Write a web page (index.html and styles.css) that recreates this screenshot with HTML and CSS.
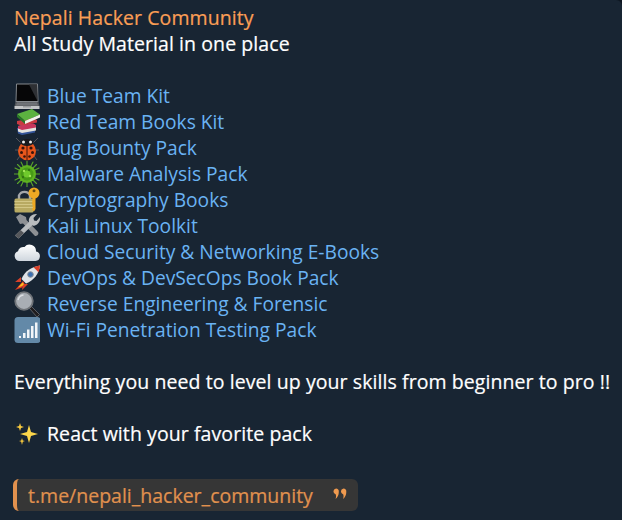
FILE: index.html
```html
<!DOCTYPE html>
<html lang="en">
<head>
<meta charset="utf-8">
<title>Nepali Hacker Community</title>
<link rel="stylesheet" href="styles.css">
</head>
<body>
<main class="bubble">
  <div class="line sender">Nepali Hacker Community</div>
  <div class="line">All Study Material in one place</div>
  <div class="line"></div>
  <ul class="packs">
    <li class="pack"><svg class="emoji" viewBox="0 0 26 26"><path d="M3 .5h20a1 1 0 0 1 1 1l.5 17.500h-23L2 1.500a1 1 0 0 1 1-1z" fill="#85898e"/><path d="M3 1.500h20l.5 16.500h-21z" fill="#060607"/><path d="M15 1.500h8l.5 16.500z" fill="#2e3034"/><path d="M1.500 19h23l1 4H.5z" fill="#54575b"/><path d="M3 20h20M2.500 21h21M2 22h22" stroke="#8c8f93" stroke-width=".6"/><path d="M.5 23h25v3H.5z" fill="#c3c5c7"/><path d="M9 23h8v1.500H9z" fill="#9a9c9f"/></svg><a class="link">Blue Team Kit</a></li>
    <li class="pack"><svg class="emoji" viewBox="0 0 26 26"><path d="M3 19l15-2 3 1.500v5L8 26l-4-1.500z" fill="#34559a"/><path d="M4 17l15-2 3 1.500v5L8 24l-4-1.500z" fill="#e4e4de"/><path d="M3 12l16-3 4 2v2.500L8 17 3 15z" fill="#c93a42"/><path d="M4 17l15-2.500 3 1.500v2.500L8 21l-4-1.500z" fill="#c7365c"/><path d="M3 5L18 0l8 5.500-15 6.500z" fill="#5cb240"/><path d="M3 5l8 7v3L3 8z" fill="#2a7828"/><path d="M11 12l15-6.500v3L11 15z" fill="#f2f2ea"/></svg><a class="link">Red Team Books Kit</a></li>
    <li class="pack"><svg class="emoji" viewBox="0 0 26 26"><g stroke="#55555c" stroke-width="1" fill="none"><path d="M7 8L2 3M19 8l5-5M5 15H1M21 15h4M6 21l-3 4M20 21l3 4"/></g><ellipse cx="13" cy="16" rx="9" ry="9.200" fill="#e8561c"/><path d="M13 10v15" stroke="#43150a" stroke-width="1"/><circle cx="9" cy="13" r="1.600" fill="#3a120a"/><circle cx="17" cy="13" r="1.600" fill="#3a120a"/><circle cx="7.500" cy="17.500" r="1.500" fill="#3a120a"/><circle cx="18.500" cy="17.500" r="1.500" fill="#3a120a"/><circle cx="10.500" cy="21.500" r="1.300" fill="#3a120a"/><circle cx="15.500" cy="21.500" r="1.300" fill="#3a120a"/><ellipse cx="13" cy="7.500" rx="6.500" ry="3.500" fill="#1a1a1e"/><circle cx="9.500" cy="7" r="1.500" fill="#ececec"/><circle cx="16.500" cy="7" r="1.500" fill="#ececec"/></svg><a class="link">Bug Bounty Pack</a></li>
    <li class="pack"><svg class="emoji" viewBox="0 0 26 26"><g stroke="#5aa62c" stroke-width="1.100" stroke-linecap="round"><path d="M13 0v26M0 13h26M3.500 3.500l19 19M22.500 3.500l-19 19M7 1l12 24M19 1L7 25M1 7l24 12M25 7L1 19"/></g><circle cx="13" cy="13" r="9" fill="#5fb321"/><circle cx="13" cy="13" r="6.500" fill="#479a17"/><circle cx="13" cy="13" r="3.500" fill="#6fc92c"/><circle cx="10" cy="10" r="1.200" fill="#a5e65a"/><circle cx="16" cy="15" r="1.200" fill="#a5e65a"/><circle cx="15" cy="9" r="1" fill="#2b6b10"/><circle cx="9" cy="16" r="1" fill="#2b6b10"/></svg><a class="link">Malware Analysis Pack</a></li>
    <li class="pack"><svg class="emoji" viewBox="0 0 26 26"><path d="M5 13V8.500a6 6 0 0 1 11 0V13" fill="none" stroke="#a3a6a9" stroke-width="2.400"/><rect x="0.500" y="11.500" width="19" height="14" rx="1.500" fill="#b8aa62"/><path d="M.5 14.500h19M.5 17.500h19M.5 20.500h19" stroke="#d6cb8a" stroke-width=".9"/><circle cx="20" cy="6" r="5.500" fill="#eda924"/><circle cx="20" cy="3.800" r="1.500" fill="#6a4d10"/><path d="M18.500 10.500h3v11.500l-1.500 2.500-1.800-1.700v-1.300l1-1-1-1 1-1-1-1z" fill="#eda924"/></svg><a class="link">Cryptography Books</a></li>
    <li class="pack"><svg class="emoji" viewBox="0 0 26 26"><path d="M2 4l4-3 6 3 .5 3L24 19c1 1.500 0 4-3 4L9 10.500 6 11z" fill="#8d9094"/><path d="M4.500 25.500l-3.500-3L15 9c-1-4 2.500-8.500 8-8l-3.500 4 .5 2.500 2.500.5 3.500-4c.8 5.500-4 9.500-8 8.500z" fill="#b9bcbf"/><path d="M4.500 25.500l-3.500-3 5.500-5.500 3.500 3z" fill="#55575b"/></svg><a class="link">Kali Linux Toolkit</a></li>
    <li class="pack"><svg class="emoji" viewBox="0 0 26 26"><defs><linearGradient id="cloud" x1="0" y1="0" x2="0" y2="1"><stop offset="0" stop-color="#ffffff"/><stop offset="1" stop-color="#cfd6de"/></linearGradient></defs><path d="M5.500 22a5 5 0 0 1-1.500-9.700A5.500 5.500 0 0 1 10.500 8 6.500 6.500 0 0 1 22 12.500a4.800 4.800 0 0 1-.5 9.500z" fill="url(#cloud)"/></svg><a class="link">Cloud Security &amp; Networking E-Books</a></li>
    <li class="pack"><svg class="emoji" viewBox="0 0 26 26"><path d="M7 12l-6 5 6 0zM14 19l-6 6 1-6z" fill="#d8402a"/><path d="M9 16l-8 9 7-2.500 3-3z" fill="#e03a26"/><path d="M8.500 17.500l-4.500 5 4.200-1.600 1.800-1.900z" fill="#f7c21e"/><path d="M7.500 14C10.500 6 18 2 26 .5c-1 8-6 15-14 18z" fill="#e0e3e7"/><path d="M19.500 2.200C21.500 1.400 24 1 26 .5c-.2 2.300-.7 4.500-1.500 6.700z" fill="#d8402a"/><circle cx="16.500" cy="9.500" r="2.800" fill="#3c6fb0" stroke="#8a8f96" stroke-width="1"/></svg><a class="link">DevOps &amp; DevSecOps Book Pack</a></li>
    <li class="pack"><svg class="emoji" viewBox="0 0 26 26"><path d="M15.500 17.500l2-2 8 8-2.500 2.500z" fill="#1f1d1f" stroke="#6d6f72" stroke-width=".8"/><circle cx="10" cy="10" r="8.800" fill="#a9aeb4" stroke="#6f7378" stroke-width="1.800"/><path d="M4 9a6.500 6.500 0 0 1 5.500-5" stroke="#dbdee2" stroke-width="1.500" fill="none"/></svg><a class="link">Reverse Engineering &amp; Forensic</a></li>
    <li class="pack"><svg class="emoji" viewBox="0 0 26 26"><rect x="0.500" y="0" width="26" height="26" rx="3.500" fill="#6389a8"/><path d="M5 19h2v2H5zM9 16h2.500v5H9zM13 12.500h2.500V21H13zM17 9h2.500v12H17zM21 5.500h2.500V21H21z" fill="#f2f5f8"/></svg><a class="link">Wi-Fi Penetration Testing Pack</a></li>
  </ul>
  <div class="line"></div>
  <div class="line">Everything you need to level up your skills from beginner to pro !!</div>
  <div class="line"></div>
  <div class="line react"><svg class="emoji" viewBox="0 0 26 26"><path d="M15 4l2 7 7 2-7 2-2 7-2-7-7-2 7-2z" fill="#fbd64a"/><path d="M6 2l1 3 3 1-3 1-1 3-1-3-3-1 3-1zM8 17l.8 2.500L11 20l-2.200.800L8 24l-.8-3.200L5 20l2.200-.500z" fill="#f7c93e"/></svg>React with your favorite pack</div>
  <div class="line"></div>
  <div class="quote">
    <span class="quote-text">t.me/nepali_hacker_community</span>
    <svg class="quote-mark" viewBox="0 0 14 12"><path d="M3 .5a3 3 0 0 1 2.800 3.500c0 3-1.300 5.500-3.300 7 .7-2 .6-3.500.3-4.600A3 3 0 0 1 3 .5zM10.500 .5a3 3 0 0 1 2.800 3.500c0 3-1.300 5.500-3.300 7 .7-2 .6-3.500.3-4.600A3 3 0 0 1 10.500 .5z" fill="#f09a4f"/></svg>
  </div>
</main>
</body>
</html>
```
FILE: styles.css
```css
html, body {
  margin: 0;
  height: 100%;
  background: #0e1621;
}
body {
  width: 622px;
  height: 520px;
  overflow: hidden;
  font-family: "Open Sans", "Noto Sans", sans-serif;
  font-size: 19.2px;
  color: #ffffff;
}
.bubble {
  box-sizing: border-box;
  height: 520px;
  padding: 5px 0 0 14px;
  background: #182533;
  border-top-right-radius: 6px;
}
.line {
  height: 26px;
  line-height: 26px;
  white-space: nowrap;
  font-size: 19.5px;
  font-weight: 500;
  letter-spacing: 0.08px;
  -webkit-text-stroke: 0.2px currentColor;
}
.sender {
  color: #fa9e55;
}
.packs {
  list-style: none;
  margin: 0;
  padding: 0;
}
.pack {
  display: flex;
  align-items: center;
  height: 26px;
  line-height: 26px;
}
.link {
  color: #6ab3f3;
}
.emoji {
  flex: none;
  width: 26px;
  height: 26px;
  margin-right: 7px;
}
.react {
  display: flex;
  align-items: center;
}
.quote {
  display: flex;
  align-items: center;
  justify-content: space-between;
  box-sizing: border-box;
  width: 345px;
  height: 32px;
  margin: 6px 0 0 -1px;
  padding: 0 11px 0 11px;
  border-left: 4px solid #e1914e;
  border-radius: 6px;
  background: #363636;
}
.quote-text {
  color: #e1914e;
  font-size: 19.5px;
  font-weight: 500;
  -webkit-text-stroke: 0.2px currentColor;
}
.quote-mark {
  width: 14px;
  height: 12px;
  margin-bottom: 2px;
}
```
